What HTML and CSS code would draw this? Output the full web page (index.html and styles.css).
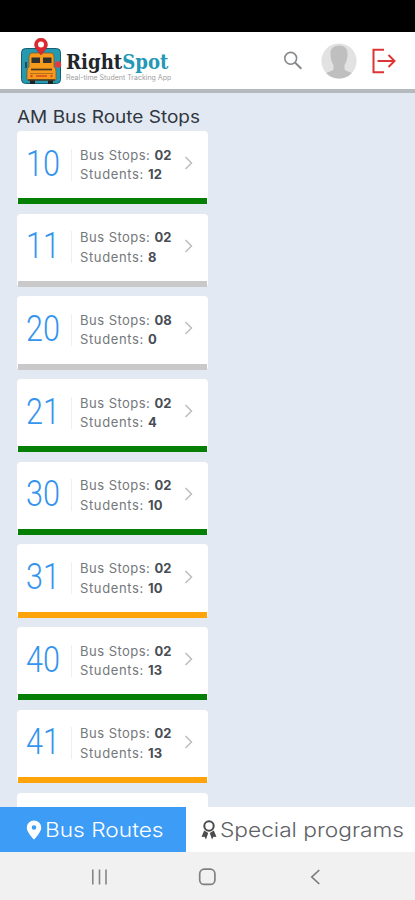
FILE: index.html
```html
<!DOCTYPE html>
<html lang="en">
<head>
<meta charset="utf-8">
<title>RightSpot</title>
<link rel="stylesheet" href="styles.css">
</head>
<body>
<div class="status"></div>
<header class="header">
  <svg class="bus" width="44" height="48" viewBox="0 0 44 48">
    <rect x="1.500" y="10.500" width="39" height="35" rx="4" fill="#2599b0" stroke="#195e70" stroke-width="1"/>
    <path d="M10 42h5v4h-5zM28 42h5v4h-5z" fill="#222"/>
    <path d="M6 24v6M36 27h3" stroke="#333" stroke-width="1.600"/>
    <path d="M12 15h19q3 0 3 4v10q2 1 2 4v9H7v-9q0-3 2-4V19q0-4 3-4z" fill="#f59a1b" stroke="#7b5423" stroke-width=".7"/>
    <path d="M11.500 19.500h8.500v5.500h-8.500zM23 19.500h8.500v5.500h-8.500z" fill="#30302e"/>
    <path d="M11 31.500h21" stroke="#4a3520" stroke-width="1.700"/>
    <path d="M10 35.500h23" stroke="#b56e1b" stroke-width="1"/>
    <path d="M16 38h11" stroke="#dc5720" stroke-width="1.800"/>
    <circle cx="11.500" cy="38" r="1.200" fill="#dc4a20"/><circle cx="31.500" cy="38" r="1.200" fill="#dc4a20"/>
    <path d="M8 42h27" stroke="#3c3021" stroke-width="1.300"/>
    <circle cx="38" cy="26.500" r="3.200" fill="#e23b3f"/>
    <path d="M21 17C17.500 12.500 14.500 10 14.500 6.500a6.500 6.500 0 0 1 13 0C27.500 10 24.500 12.500 21 17z" fill="#df2730" stroke="#8f1b20" stroke-width=".4"/>
    <circle cx="21" cy="6.500" r="3" fill="#fff"/>
  </svg>
  <div class="brand">
    <div class="name"><span>Right</span><span class="spot">Spot</span></div>
    <div class="tagline">Real-time Student Tracking App</div>
  </div>
  <svg class="search" width="20" height="20" viewBox="0 0 20 20" fill="none" stroke="#85898c"><circle cx="7.700" cy="7.300" r="5.900" stroke-width="1.600"/><path d="M12 11.500l6.300 6.200" stroke-width="2"/></svg>
  <svg class="avatar" width="36" height="36" viewBox="0 0 36 36">
    <defs><clipPath id="round"><circle cx="18" cy="18" r="17.600"/></clipPath></defs>
    <g clip-path="url(#round)"><path d="M0 0h36v36H0z" fill="#e2e2e2"/><path d="M18 2.500c-6 0-9 3.500-8.500 9 .1 4 1 7.500 3 10.500v4.500c-2 2-5 2-7.500 4V36h26v-5.500c-2.500-2-5.500-2-7.500-4V22c2-3 2.900-6.500 3-10.500.5-5.500-2.500-9-8-9z" fill="#bfbfbf"/></g>
  </svg>
  <svg class="logout" width="26" height="26" viewBox="0 0 26 26" fill="none" stroke="#dc3535" stroke-width="2"><path d="M13 1.800H2.500v22.400H13M6.500 13h17M17.500 7l6 6-6 6"/></svg>
</header>
<main class="main">
  <h1 class="title">AM Bus Route Stops</h1>
  <div class="list" id="list"></div>
</main>
<nav class="tabs">
  <div class="tab active"><svg width="16" height="20" viewBox="0 0 16 20"><path fill="#fff" fill-rule="evenodd" d="M8 .5a7.200 7.200 0 0 0-7.200 7.200C.8 12.500 8 19.500 8 19.500s7.200-7 7.200-11.800A7.200 7.200 0 0 0 8 .5zm0 4.700a2.300 2.300 0 1 1 0 4.600 2.300 2.300 0 0 1 0-4.600z"/></svg><span class="label">Bus Routes</span></div>
  <div class="tab programs"><svg width="16" height="20" viewBox="0 0 16 20"><circle cx="8" cy="6" r="4.700" fill="none" stroke="#4b4b4b" stroke-width="2"/><path fill="#4b4b4b" d="M3.200 10.500l4 2.500-2.200 6.500-1.500-2.700-3 .2zM12.800 10.500l-4 2.500 2.200 6.500 1.500-2.700 3 .2z"/></svg><span class="label">Special programs</span></div>
</nav>
<footer class="system">
  <svg width="18" height="18" viewBox="0 0 18 18" stroke="#858585" stroke-width="1.600"><path d="M2.800 1.500v15M9.500 1.500v15M16 1.500v15"/></svg>
  <svg width="18" height="18" viewBox="0 0 18 18" fill="none" stroke="#808080" stroke-width="1.700"><rect x="1.700" y="1.200" width="15.200" height="15.200" rx="4.500"/></svg>
  <svg width="18" height="18" viewBox="0 0 18 18" fill="none" stroke="#777" stroke-width="1.600"><path d="M13.300 2L5.800 9l7.500 7"/></svg>
</footer>
<script src="app.js"></script>
</body>
</html>
```
FILE: styles.css
```css
* { box-sizing: border-box; }
body { margin: 0; width: 415px; height: 900px; overflow: hidden; display: flex; flex-direction: column; background: #e3e9f2; font-family: Inter, "Open Sans", sans-serif; }
svg { flex: none; display: block; }
.status { height: 32px; background: #000; flex: none; }
.header { height: 61px; flex: none; display: flex; align-items: flex-start; background: #fff; border-bottom: 4px solid #b5babf; padding: 6px 0 0 20px; }
.brand { width: 215px; padding-top: 11px; margin-left: 2px; white-space: nowrap; }
.name { height: 27px; font: bold 19.500px/27px "DejaVu Serif", serif; color: #222529; transform: scaleX(.93); transform-origin: left; }
.spot { color: #2598b5; }
.tagline { font-size: 7px; line-height: 7px; color: #a0a0a0; margin-top: -2px; }
.search { margin: 13px 0 0 2px; }
.avatar { margin: 5px 0 0 18px; }
.logout { margin: 10px 0 0 14px; }
.main { flex: 1; min-height: 0; overflow: hidden; padding: 10px 17px 0; }
.title { margin: 0; height: 28px; font-size: 17px; line-height: 28px; font-weight: 400; color: #303640; white-space: nowrap; transform: scaleX(1.118); transform-origin: left; }
.list { display: flex; flex-direction: column; gap: 9.500px; width: 191px; }
.card { height: 73.200px; flex: none; background: #fff; border-radius: 4px; display: flex; flex-direction: column; padding: 0 1px; }
.body { flex: 1; display: flex; align-items: center; }
.bar { height: 6px; background: #c9c9c9; }
.green .bar { background: #058005; }
.orange .bar { background: #ffa30a; }
.number { width: 54px; height: 32px; padding-left: 8px; border-right: 1px solid #eeeff1; }
.number span { display: block; font: 300 36px/31px Roboto, sans-serif; color: #3594ee; transform: scaleX(.85); transform-origin: left; }
.info { width: 97px; padding: 1px 0 0 8px; font-size: 13px; line-height: 19.600px; color: #74777b; white-space: nowrap; }
.stops { letter-spacing: .48px; }
.students { letter-spacing: .62px; }
.info b { font-weight: 700; color: #484d55; letter-spacing: 0; }
.chev { margin: -3px 0 0 15px; }
.tabs { height: 45px; flex: none; display: flex; background: #fff; font-size: 20px; font-weight: 300; }
.tab { display: flex; align-items: center; white-space: nowrap; color: #5e6165; }
.active { width: 186px; padding-left: 26px; background: #3c9cf6; color: #fff; }
.label { margin: 0 0 0 3px; transform: scaleX(1.135); transform-origin: left; }
.programs { padding-left: 15px; }
.system { height: 48px; flex: none; display: flex; gap: 90px; padding: 16px 0 0 90px; background: #f1f1f1; }
```
FILE: app.js
```js
const routes = [
  ['10', '02', '12', 'green'], ['11', '02', '8', 'gray'],
  ['20', '08', '0', 'gray'], ['21', '02', '4', 'green'],
  ['30', '02', '10', 'green'], ['31', '02', '10', 'orange'],
  ['40', '02', '13', 'green'], ['41', '02', '13', 'orange']
];
const card = ([number, stops, students, color]) => `
  <div class="card ${color}">
    <div class="body">
      <div class="number"><span>${number}</span></div>
      <div class="info"><div class="stops">Bus Stops: <b>${stops}</b></div><div class="students">Students: <b>${students}</b></div></div>
      <svg class="chev" width="10" height="16" viewBox="0 0 10 16" fill="none" stroke="#bcbdbf" stroke-width="1.500"><path d="M1.500 2l6 6-6 6"/></svg>
    </div>
    <div class="bar"></div>
  </div>`;
document.getElementById('list').innerHTML = routes.map(card).join('') + '<div class="card"></div>';
```
